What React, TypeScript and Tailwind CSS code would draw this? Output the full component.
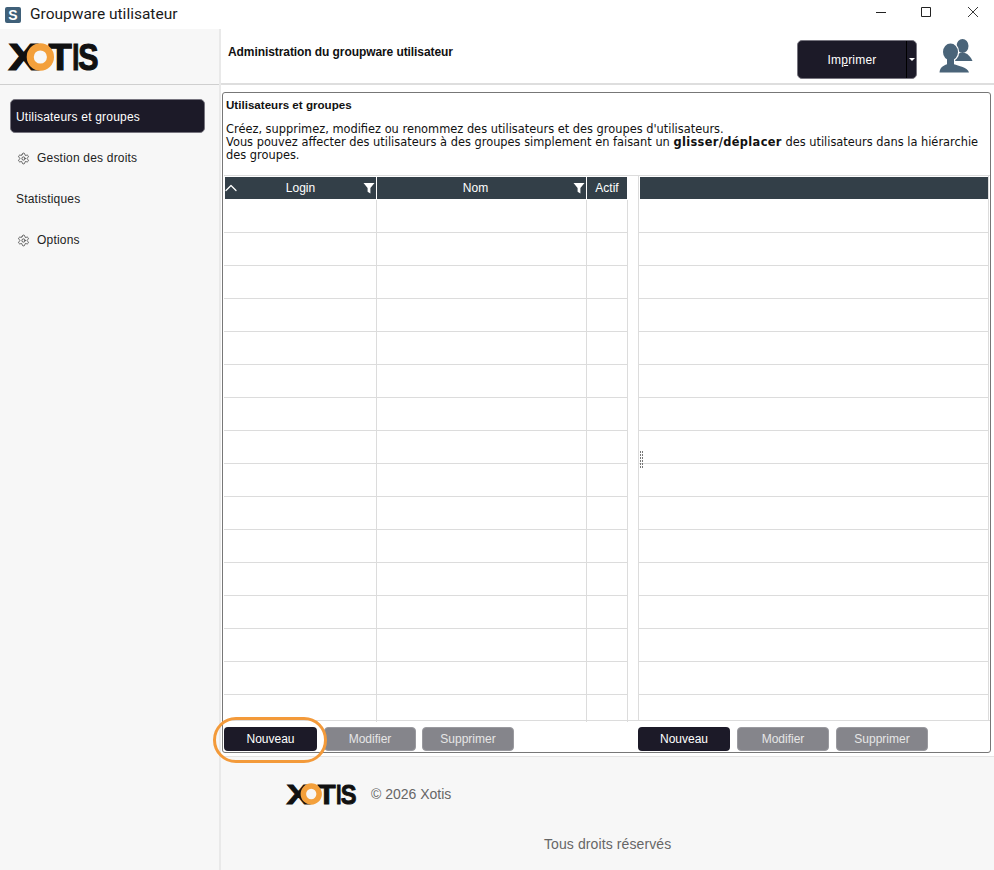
import { Settings, ChevronUp } from "lucide-react";

const rowCount = 16;
const leftCols = ["w-[153px]", "w-[210px]", "w-[41px]"];

function Logo({ className }: { className: string }) {
  return (
    <svg viewBox="0 0 90 27" className={`overflow-visible ${className}`}>
      <g
        fill="#111"
        stroke="#111"
        strokeWidth="1.2"
        fontFamily="'Liberation Sans', sans-serif"
        fontWeight="700"
        fontSize="36"
      >
        <text x="0.5" y="26.2" textLength="30" lengthAdjust="spacingAndGlyphs">X</text>
        <text x="40" y="26.2" textLength="23" lengthAdjust="spacingAndGlyphs">T</text>
        <text x="63.5" y="26.2" textLength="7" lengthAdjust="spacingAndGlyphs">I</text>
        <text x="69.5" y="26.2" textLength="20" lengthAdjust="spacingAndGlyphs">S</text>
      </g>
      <circle cx="32" cy="13.5" r="10" fill="none" stroke="#f3a03c" strokeWidth="7" />
    </svg>
  );
}

function Funnel() {
  return (
    <svg viewBox="0 0 12 12" className="h-[12px] w-[12px]">
      <path d="M0.5 1h11L7.4 6v5.5L4.6 9.8V6z" fill="#fff" />
    </svg>
  );
}

function UsersIcon() {
  const front = "M9.5 42.5C10 37.5 13 35.5 17 34.2V29h7v5.2C28 35.5 38 37.5 39 42.5Z";
  return (
    <svg viewBox="0 0 50 50" className="h-[50px] w-[50px]">
      <g fill="#4a6479">
        <ellipse cx="32.5" cy="16" rx="6" ry="7" />
        <path d="M24 31c1-4 3-7 6-8h5c3 1 6 4 7.5 8z" />
      </g>
      <g fill="#fff" stroke="#fff" strokeWidth="2.4">
        <ellipse cx="20.5" cy="22" rx="7.5" ry="8.5" />
        <path d={front} />
      </g>
      <g fill="#4a6479">
        <ellipse cx="20.5" cy="22" rx="7.5" ry="8.5" />
        <path d={front} />
      </g>
    </svg>
  );
}

function Btn({ label, active, className = "" }: { label: string; active?: boolean; className?: string }) {
  return (
    <button
      className={
        active
          ? `h-[24px] rounded-[4px] bg-[#1c1a28] pb-px text-[12px] text-white ${className}`
          : "h-[24px] w-[92px] rounded-[4px] border border-[#9a9a9f] bg-[#85858b] text-[12px] text-[#e6e6e6]"
      }
    >
      {label}
    </button>
  );
}

function NavItem({ label, icon, active }: { label: string; icon?: boolean; active?: boolean }) {
  return (
    <div
      className={`flex h-[34px] items-center rounded-[5px] pt-[2px] text-[12px] tracking-[0.2px] ${
        active ? "border border-[#77757f] bg-[#1c1a28] pl-[5px] text-white" : "pl-[6px] text-[#222]"
      }`}
    >
      {icon && <Settings size={13} strokeWidth={1.4} className="ml-[1px] mr-[7px] text-[#333]" />}
      {label}
    </div>
  );
}

export default function App() {
  return (
    <div className="relative flex h-[870px] w-[994px] flex-col overflow-hidden bg-white font-['Liberation_Sans',sans-serif]">
      {/* title bar */}
      <div className="flex h-[29px] shrink-0 items-center bg-white pl-[5px]">
        <div className="flex h-[16px] w-[16px] items-center justify-center rounded-[2px] bg-[#3f6079] text-[14px] font-bold leading-none text-white">
          S
        </div>
        <span className="ml-[9px] font-['Roboto',sans-serif] text-[15.5px] text-[#1a1a1a]">Groupware utilisateur</span>
        <div className="mb-[5px] ml-auto flex items-center pr-[16px]">
          <svg viewBox="0 0 10 10" className="mr-[35px] h-[10px] w-[10px]">
            <path d="M0 5.5h10" stroke="#222" fill="none" />
          </svg>
          <svg viewBox="0 0 10 10" className="mr-[37px] h-[10px] w-[10px]">
            <path d="M.5.5h9v9h-9z" stroke="#222" fill="none" />
          </svg>
          <svg viewBox="0 0 10 10" className="h-[10px] w-[10px]">
            <path d="M0 0l10 10M10 0L0 10" stroke="#222" strokeWidth="0.9" fill="none" />
          </svg>
        </div>
      </div>

      <div className="flex min-h-0 flex-1">
        {/* sidebar */}
        <div className="w-[221px] shrink-0 border-r-2 border-[#e9e9e9] bg-[#f7f7f7]">
          <div className="flex h-[56px] items-center border-b border-[#cfcfcf] pl-[8px]">
            <Logo className="h-[28px] w-[91px]" />
          </div>
          <div className="flex flex-col gap-[7px] pl-[10px] pr-[14px] pt-[14px]">
            <NavItem label="Utilisateurs et groupes" active />
            <NavItem label="Gestion des droits" icon />
            <NavItem label="Statistiques" />
            <NavItem label="Options" icon />
          </div>
        </div>

        {/* main */}
        <div className="flex min-w-0 flex-1 flex-col bg-[#f7f7f7]">
          <div className="flex h-[56px] shrink-0 border-b-2 border-[#dedede] bg-white pl-[7px]">
            <div className="pt-[14px] text-[12px] font-bold tracking-[-0.08px] text-[#111]">Administration du groupware utilisateur</div>
            <div className="ml-auto mt-[11px] flex h-[39px] w-[120px] rounded-[5px] border border-[#77757f] bg-[#1c1a28] text-white">
              <div className="flex flex-1 items-center justify-center border-r border-black text-[12px] tracking-[0.2px]">
                <span>
                  Im<u>p</u>rimer
                </span>
              </div>
              <div className="flex w-[9px] items-center justify-center">
                <div className="h-0 w-0 border-x-[3px] border-t-[3px] border-x-transparent border-t-white" />
              </div>
            </div>
            <div className="ml-[13px] mr-[14px] mt-px">
              <UsersIcon />
            </div>
          </div>

          <div className="flex h-[671px] shrink-0 items-end bg-white pb-[3px] pl-px pr-[3px]">
            <div className="flex h-[661px] w-[769px] flex-col rounded-[3px] border border-[#777] bg-white pl-[1px]">
              <div className="pl-[2px] pt-[5px] text-[11.6px] font-bold leading-[13px] text-[#111]">Utilisateurs et groupes</div>
              <div className="mt-[12px] pl-[2px] pr-[8px] font-['DejaVu_Sans',sans-serif] text-[11.4px] leading-[13px] text-[#111]">
                Créez, supprimez, modifiez ou renommez des utilisateurs et des groupes d'utilisateurs.
                <br />
                Vous pouvez affecter des utilisateurs à des groupes simplement en faisant un <b className="tracking-[0.35px]">glisser/déplacer</b> des utilisateurs dans la hiérarchie
                <br />
                des groupes.
              </div>

              <div className="relative mt-[13px] flex h-[546px] border-b border-t border-[#dcdcdc]">
                {/* left table */}
                <div className="w-[404px] shrink-0">
                  <div className="flex h-[23px] border-t border-white pl-px">
                    <div className="relative mr-px flex w-[151px] items-center justify-center bg-[#333f48] text-[12px] text-white">
                      <ChevronUp size={20} strokeWidth={1.5} className="absolute left-[-4px]" />
                      Login
                      <span className="absolute right-[1px]">
                        <Funnel />
                      </span>
                    </div>
                    <div className="relative mr-px flex w-[209px] items-center justify-center bg-[#333f48] pr-[12px] text-[12px] text-white">
                      Nom
                      <span className="absolute right-[1px]">
                        <Funnel />
                      </span>
                    </div>
                    <div className="flex w-[40px] items-center justify-center bg-[#333f48] text-[12px] text-white">Actif</div>
                  </div>
                  <div className="h-[523px] overflow-hidden">
                    <div className="h-px border-r border-transparent" />
                    {Array.from({ length: rowCount }).map((_, i) => (
                      <div key={i} className="flex h-[33px] border-b border-[#dcdcdc]">
                        {leftCols.map((w, j) => (
                          <div key={j} className={`${w} h-full border-r border-[#dcdcdc]`} />
                        ))}
                      </div>
                    ))}
                  </div>
                </div>

                {/* splitter */}
                <div className="w-[11px] shrink-0 border-r border-[#dcdcdc]" />

                {/* right table */}
                <div className="w-[350px] shrink-0 border-r border-[#dcdcdc]">
                  <div className="ml-px h-[23px] border-t border-white bg-[#333f48]" />
                  <div className="h-[523px] overflow-hidden pt-px">
                    {Array.from({ length: rowCount }).map((_, i) => (
                      <div key={i} className="h-[33px] border-b border-[#dcdcdc]" />
                    ))}
                  </div>
                </div>

                {/* grip */}
                <div className="absolute left-[416px] top-[275px] grid grid-cols-2 gap-x-px gap-y-px">
                  {Array.from({ length: 12 }).map((_, i) => (
                    <div key={i} className="h-[2px] w-px bg-[#777]" />
                  ))}
                </div>
              </div>

              <div className="mt-[6px] flex">
                <div className="flex w-[414px] gap-[6px]">
                  <Btn label="Nouveau" active className="mr-px w-[93px]" />
                  <Btn label="Modifier" />
                  <Btn label="Supprimer" />
                </div>
                <div className="flex gap-[7px]">
                  <Btn label="Nouveau" active className="w-[92px]" />
                  <Btn label="Modifier" />
                  <Btn label="Supprimer" />
                </div>
              </div>
            </div>
          </div>

          {/* footer */}
          <div className="flex-1 border-t border-[#e4e4e4] text-[14px] text-[#666]">
            <div className="flex items-center pl-[65px] pt-[26px]">
              <Logo className="h-[22px] w-[71px]" />
              <span className="ml-[14px]">© 2026 Xotis</span>
            </div>
            <div className="pl-[323px] pt-[29px] tracking-[0.1px]">Tous droits réservés</div>
          </div>
        </div>
      </div>

      {/* highlight round the first button */}
      <div className="pointer-events-none absolute left-[213px] top-[717px] h-[46px] w-[114px] rounded-[23px] border-[3px] border-[#f39a3a]" />
    </div>
  );
}
